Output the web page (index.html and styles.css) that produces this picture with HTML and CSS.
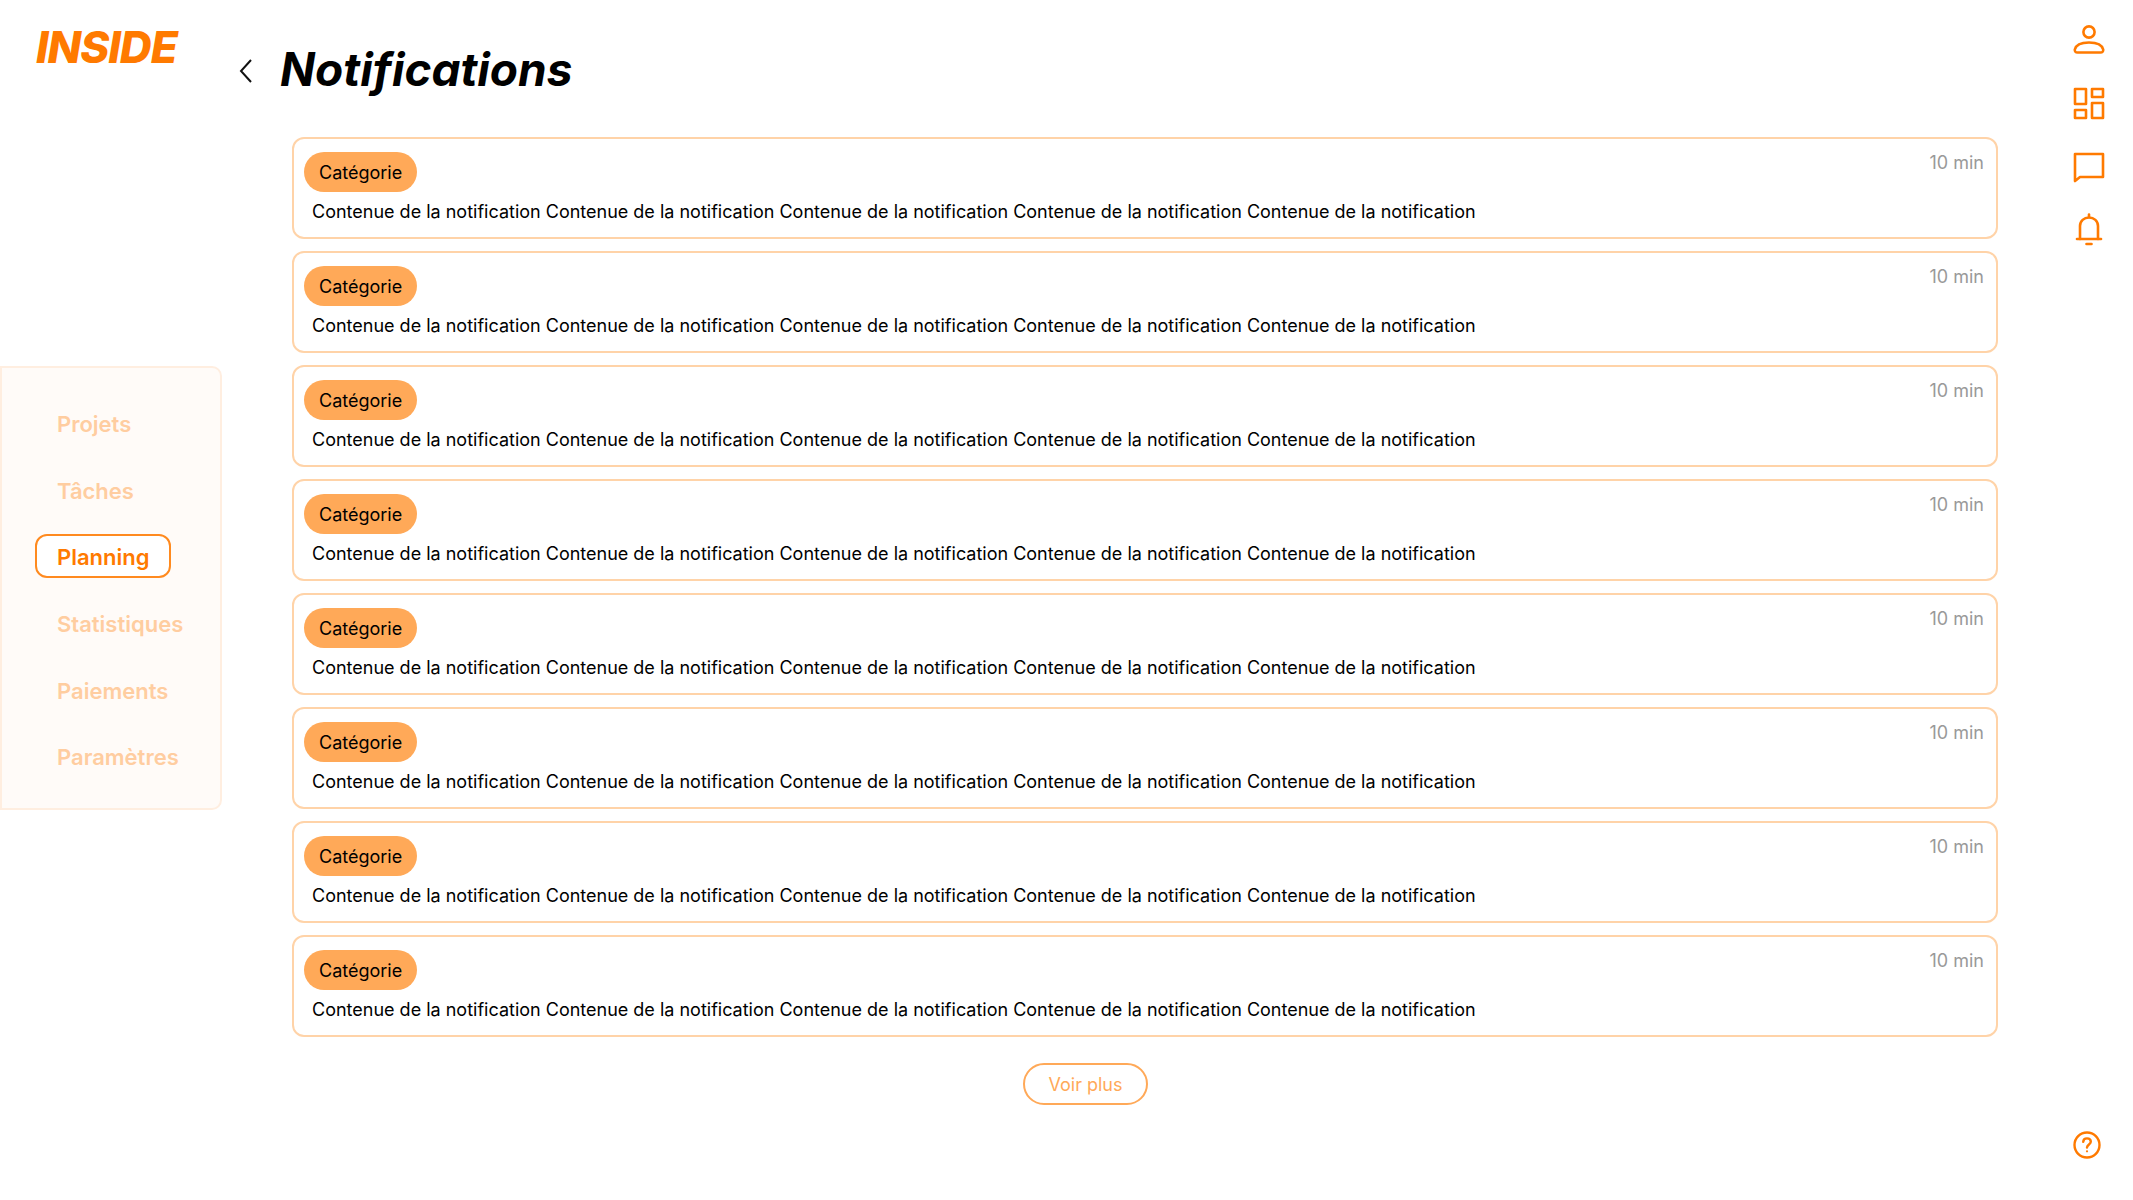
FILE: index.html
```html
<!DOCTYPE html>
<html lang="fr">
<head>
  <meta charset="UTF-8" />
  <title>Notifications</title>
  <link rel="stylesheet" href="styles.css">
</head>
<body>
  <div class="page">
    <div class="left">
      <div class="logo">INSIDE</div>
      <div class="menu">
        <div class="menu-item">Projets</div>
        <div class="menu-item">Tâches</div>
        <div class="menu-item active">Planning</div>
        <div class="menu-item">Statistiques</div>
        <div class="menu-item">Paiements</div>
        <div class="menu-item">Paramètres</div>
      </div>
    </div>

    <div class="main">
      <div class="title-row">
        <svg class="back" width="16" height="26" viewBox="0 0 16 26" fill="none" stroke="#111" stroke-width="2"><path d="M13 2 L3 13 L13 24"/></svg>
        <h1>Notifications</h1>
      </div>
      <div class="list">
        <div class="card"><div class="card-top"><span class="tag">Catégorie</span><span class="time">10 min</span></div><p>Contenue de la notification Contenue de la notification Contenue de la notification Contenue de la notification Contenue de la notification</p></div>
        <div class="card"><div class="card-top"><span class="tag">Catégorie</span><span class="time">10 min</span></div><p>Contenue de la notification Contenue de la notification Contenue de la notification Contenue de la notification Contenue de la notification</p></div>
        <div class="card"><div class="card-top"><span class="tag">Catégorie</span><span class="time">10 min</span></div><p>Contenue de la notification Contenue de la notification Contenue de la notification Contenue de la notification Contenue de la notification</p></div>
        <div class="card"><div class="card-top"><span class="tag">Catégorie</span><span class="time">10 min</span></div><p>Contenue de la notification Contenue de la notification Contenue de la notification Contenue de la notification Contenue de la notification</p></div>
        <div class="card"><div class="card-top"><span class="tag">Catégorie</span><span class="time">10 min</span></div><p>Contenue de la notification Contenue de la notification Contenue de la notification Contenue de la notification Contenue de la notification</p></div>
        <div class="card"><div class="card-top"><span class="tag">Catégorie</span><span class="time">10 min</span></div><p>Contenue de la notification Contenue de la notification Contenue de la notification Contenue de la notification Contenue de la notification</p></div>
        <div class="card"><div class="card-top"><span class="tag">Catégorie</span><span class="time">10 min</span></div><p>Contenue de la notification Contenue de la notification Contenue de la notification Contenue de la notification Contenue de la notification</p></div>
        <div class="card"><div class="card-top"><span class="tag">Catégorie</span><span class="time">10 min</span></div><p>Contenue de la notification Contenue de la notification Contenue de la notification Contenue de la notification Contenue de la notification</p></div>
      </div>
      <button class="more">Voir plus</button>
    </div>

    <div class="right">
      <div class="icons">
        <svg width="34" height="34" viewBox="0 0 34 34" fill="none" stroke="#ff7a00" stroke-width="2.6"><circle cx="17" cy="8" r="5.6"/><path d="M5.5 28.5 H28.5 Q31.5 28.5 31.2 25.5 C30 20.5 24 18.5 17 18.5 C10 18.5 4 20.5 2.8 25.5 Q2.5 28.5 5.5 28.5 Z"/></svg>
        <svg width="34" height="34" viewBox="0 0 34 34" fill="none" stroke="#ff7a00" stroke-width="2.6" stroke-linejoin="round"><rect x="3" y="2" width="11" height="15"/><rect x="20" y="2" width="11" height="8"/><rect x="3" y="23" width="11" height="8"/><rect x="20" y="16" width="11" height="15"/></svg>
        <svg width="34" height="34" viewBox="0 0 34 34" fill="none" stroke="#ff7a00" stroke-width="2.6" stroke-linejoin="round"><path d="M3 4 H31 V27 H8 L3 31 Z"/></svg>
        <svg width="34" height="34" viewBox="0 0 34 34" fill="none" stroke="#ff7a00" stroke-width="2.6" stroke-linecap="round"><path d="M8 26 V13 C8 8 12 4.5 17 4.5 C22 4.5 26 8 26 13 V26"/><path d="M5 26 H29"/><path d="M17 1.5 V4"/><path d="M14.5 31 H19.5"/></svg>
      </div>
      <svg width="30" height="30" viewBox="0 0 30 30" fill="none" stroke="#ff7a00" stroke-width="2.4"><circle cx="15" cy="15" r="12.5"/><path d="M11.2 11.8 C11.4 9.6 13 8.4 15 8.4 C17.2 8.4 18.8 9.8 18.8 11.7 C18.8 14.4 15 14.6 15 17.6" stroke-linecap="round"/><circle cx="15" cy="21.3" r="1.1" fill="#ff7a00" stroke="none"/></svg>
    </div>
  </div>
</body>
</html>
```

FILE: styles.css
```css
* {
  box-sizing: border-box;
}
body {
  margin: 0;
  font-family: Inter, "Noto Sans", sans-serif;
  background: white;
  color: #000;
}
.page {
  display: flex;
  height: 1200px;
}
.left {
  width: 222px;
  flex-shrink: 0;
}
.logo {
  margin: 22px 0 0 36px;
  font-size: 44px;
  line-height: 50px;
  font-weight: 800;
  font-style: italic;
  letter-spacing: -1px;
  color: #ff7a00;
}
.menu {
  margin-top: 294px;
  height: 444px;
  padding: 33px 0 0 33px;
  background: #fffbf8;
  border: 2px solid #ffeee0;
  border-radius: 0 10px 10px 0;
  display: flex;
  flex-direction: column;
  align-items: flex-start;
}
.menu-item {
  height: 44px;
  margin-bottom: 22.7px;
  padding: 0 20px;
  line-height: 42px;
  font-size: 22px;
  font-weight: 600;
  color: #ffcda0;
  border: 2px solid transparent;
  border-radius: 12px;
}
.menu-item.active {
  color: #ff7a00;
  background: white;
  border-color: #ff8a1f;
}
.main {
  flex: 1;
  padding: 0 0 0 16px;
}
.title-row {
  display: flex;
  align-items: center;
  height: 137px;
  padding-bottom: 0;
}
.back {
  margin: 4px 26px 0 0;
}
h1 {
  margin: 0;
  font-size: 46px;
  font-weight: 700;
  font-style: italic;
}
.list {
  margin-left: 54px;
  width: 1706px;
  display: flex;
  flex-direction: column;
  gap: 12px;
}
.card {
  height: 102px;
  padding: 13px 12px 0 10px;
  border: 2px solid #ffd3a8;
  border-radius: 12px;
}
.card-top {
  display: flex;
  justify-content: space-between;
  align-items: flex-start;
}
.tag {
  height: 40px;
  padding: 0 15px;
  line-height: 41px;
  font-size: 18px;
  background: #ffa958;
  border-radius: 20px;
}
.time {
  font-size: 18px;
  color: #999;
}
.card p {
  margin: 9px 0 0 8px;
  font-size: 18px;
  line-height: 22px;
}
.more {
  display: block;
  margin: 26px 0 0 785px;
  width: 125px;
  height: 42px;
  font-family: inherit;
  font-size: 18px;
  color: #ffa958;
  background: white;
  border: 2px solid #ffa958;
  border-radius: 21px;
}
.right {
  width: 61px;
  flex-shrink: 0;
  padding: 24px 0 0 0;
  display: flex;
  flex-direction: column;
  justify-content: space-between;
  height: 1160px;
  align-items: flex-start;
}
.icons {
  display: flex;
  flex-direction: column;
  gap: 29px;
}
```
